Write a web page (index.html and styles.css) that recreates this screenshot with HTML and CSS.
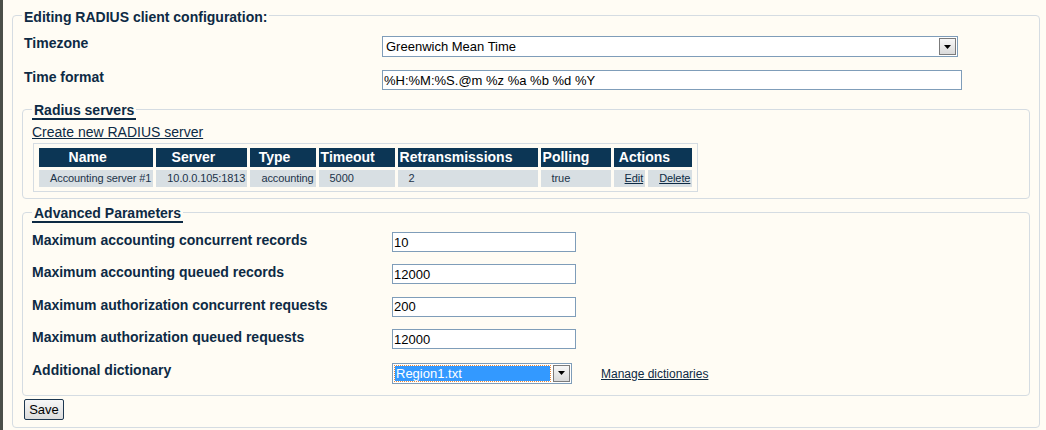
FILE: index.html
```html
<!DOCTYPE html>
<html lang="en">

<head>
    <meta charset="UTF-8">
    <meta name="viewport" content="width=device-width, initial-scale=1.0">
    <title>RADIUS client configuration</title>
    <link rel="stylesheet" href="styles.css">
</head>

<body>

    <form class="config-form">
        <fieldset class="box box-main">
            <legend class="box-title">Editing RADIUS client configuration:</legend>

            <div class="row row-timezone">
                <label class="row-label">Timezone</label>
                <div class="select-box select-wide">
                    <select class="select-field">
                        <option>Greenwich Mean Time</option>
                    </select>
                    <span class="select-btn">
                        <svg width="7" height="4" viewBox="0 0 7 4"><path d="M0 0h7L3.5 4z" fill="#000"/></svg>
                    </span>
                </div>
            </div>

            <div class="row row-format">
                <label class="row-label">Time format</label>
                <input type="text" class="text-field text-wide" value="%H:%M:%S.@m %z %a %b %d %Y">
            </div>

            <fieldset class="box box-sub">
                <legend class="box-title box-title-line">Radius servers</legend>
                <div class="create-line"><a href="#" class="link">Create new RADIUS server</a></div>
                <table class="servers">
                    <tr>
                        <th>Name</th>
                        <th>Server</th>
                        <th>Type</th>
                        <th class="col-timeout">Timeout</th>
                        <th class="col-retrans">Retransmissions</th>
                        <th class="col-polling">Polling</th>
                        <th colspan="2">Actions</th>
                    </tr>
                    <tr>
                        <td>Accounting server #1</td>
                        <td>10.0.0.105:1813</td>
                        <td>accounting</td>
                        <td>5000</td>
                        <td>2</td>
                        <td>true</td>
                        <td><a href="#" class="link">Edit</a></td>
                        <td><a href="#" class="link">Delete</a></td>
                    </tr>
                </table>
            </fieldset>

            <fieldset class="box box-sub box-advanced">
                <legend class="box-title box-title-line">Advanced Parameters</legend>

                <div class="adv-row">
                    <label class="row-label">Maximum accounting concurrent records</label>
                    <input type="text" class="text-field text-small" value="10">
                </div>
                <div class="adv-row">
                    <label class="row-label">Maximum accounting queued records</label>
                    <input type="text" class="text-field text-small" value="12000">
                </div>
                <div class="adv-row">
                    <label class="row-label">Maximum authorization concurrent requests</label>
                    <input type="text" class="text-field text-small" value="200">
                </div>
                <div class="adv-row">
                    <label class="row-label">Maximum authorization queued requests</label>
                    <input type="text" class="text-field text-small" value="12000">
                </div>
                <div class="adv-row adv-row-last">
                    <label class="row-label">Additional dictionary</label>
                    <div class="dict-line">
                        <div class="select-box select-small">
                            <select class="select-field is-focused">
                                <option>Region1.txt</option>
                            </select>
                            <span class="select-btn">
                                <svg width="7" height="4" viewBox="0 0 7 4"><path d="M0 0h7L3.5 4z" fill="#000"/></svg>
                            </span>
                        </div>
                        <a href="#" class="link link-small">Manage dictionaries</a>
                    </div>
                </div>
            </fieldset>

            <button type="button" class="btn-save">Save</button>
        </fieldset>
    </form>

</body>

</html>
```

FILE: styles.css
```css
html{
    background-color: #fffcf4;
}

body{
    margin: 0;
    height: 430px;
    box-sizing: border-box;
    border-left: 3px solid #4b4f48;
    padding: 5px 6px 0 9px;
    font-family: "Liberation Sans", Arial, sans-serif;
    color: #0d2a44;
    background-color: #fffcf4;
}

.box{
    margin: 0;
    border: 1px solid #d5dce2;
    border-radius: 4px;
    min-width: 0;
}

.box-main{
    padding: 10px 9px 7px 9px;
}

.box-sub{
    padding: 4px 9px 6px 9px;
}

.box-advanced{
    margin-top: 2px;
    padding: 9px 9px 11px 9px;
}

.box-title{
    padding: 4px 2px 0 2px;
    font-size: 14px;
    line-height: 16px;
    font-weight: bold;
    color: #0d2a44;
}

.box-title-line{
    border-bottom: 2px solid #0d2a44;
}

.row{
    display: grid;
    grid-template-columns: 358px 1fr;
    align-items: start;
    padding-left: 2px;
}

.row-timezone{
    margin-bottom: 12px;
}

.row-format{
    margin-bottom: 8px;
}

.row-label{
    font-size: 14px;
    line-height: 16px;
    font-weight: bold;
    color: #0d2a44;
}

.row .select-box,
.row .text-field{
    margin-top: 1px;
}

.adv-row{
    display: grid;
    grid-template-columns: 360px 1fr;
    align-items: start;
    margin-bottom: 12.4px;
}

.adv-row-last{
    margin-bottom: 0;
}

.adv-row-last .select-box{
    margin-top: 1.4px;
}

.text-field{
    height: 20px;
    box-sizing: border-box;
    border: 1px solid #7f9db9;
    padding: 0 1px;
    margin: 0;
    font-family: "Liberation Sans", Arial, sans-serif;
    font-size: 13px;
    color: #000;
    background-color: #fff;
    outline: none;
}

.text-wide{
    width: 580px;
}

.text-small{
    width: 184px;
}

.select-box{
    display: flex;
    height: 21px;
    box-sizing: border-box;
    border: 1px solid #7f9db9;
    background-color: #fff;
}

.select-wide{
    width: 576px;
}

.select-small{
    width: 180px;
}

.select-field{
    flex: 1;
    min-width: 0;
    appearance: none;
    -webkit-appearance: none;
    border: none;
    margin: 0;
    padding: 0 3px;
    height: 19px;
    font-family: "Liberation Sans", Arial, sans-serif;
    font-size: 13px;
    color: #000;
    background-color: transparent;
    outline: none;
}

.select-field.is-focused{
    margin: 2px;
    height: 15px;
    padding: 0 1px;
    color: #fff;
    background-color: #3399ff;
    outline: 1px dotted #e8883a;
}

.select-btn{
    width: 17px;
    height: 17px;
    margin: 1px;
    box-sizing: border-box;
    border: 1px solid #7b7b7b;
    background: linear-gradient(#f7f7f7, #dadada);
    display: flex;
    align-items: center;
    justify-content: center;
}

.link{
    color: #0d2a44;
    text-decoration: underline;
}

.create-line{
    font-size: 14px;
    line-height: 16px;
    margin-bottom: 3px;
}

.servers{
    border: 1px solid #d5dce2;
    padding: 1px 2px;
    border-spacing: 3px;
    margin-left: 1px;
}

.servers th{
    background-color: #0c3655;
    color: #fff;
    font-size: 14px;
    line-height: 19px;
    font-weight: bold;
    text-align: center;
    padding: 0 19px 0 2px;
    white-space: nowrap;
}

.servers .col-timeout{
    width: 55px;
    text-align: left;
}

.servers .col-retrans{
    width: 119px;
    text-align: left;
}

.servers .col-polling{
    width: 49px;
    text-align: left;
}

.servers td{
    background-color: #d8dfe3;
    color: #1c3349;
    font-size: 11px;
    line-height: 17px;
    letter-spacing: -0.1px;
    padding: 0 2px 0 11px;
    white-space: nowrap;
}

.dict-line{
    display: flex;
    align-items: center;
    gap: 29px;
}

.link-small{
    font-size: 12px;
    margin-top: 2px;
}

.btn-save{
    margin: 3px 0 0 2px;
    width: 40px;
    height: 21px;
    padding: 0;
    border: 1px solid #1d3750;
    border-radius: 2px;
    background: linear-gradient(#f6f6f6, #dcdcdc);
    font-family: "Liberation Sans", Arial, sans-serif;
    font-size: 13px;
    color: #000;
    cursor: pointer;
}
```
